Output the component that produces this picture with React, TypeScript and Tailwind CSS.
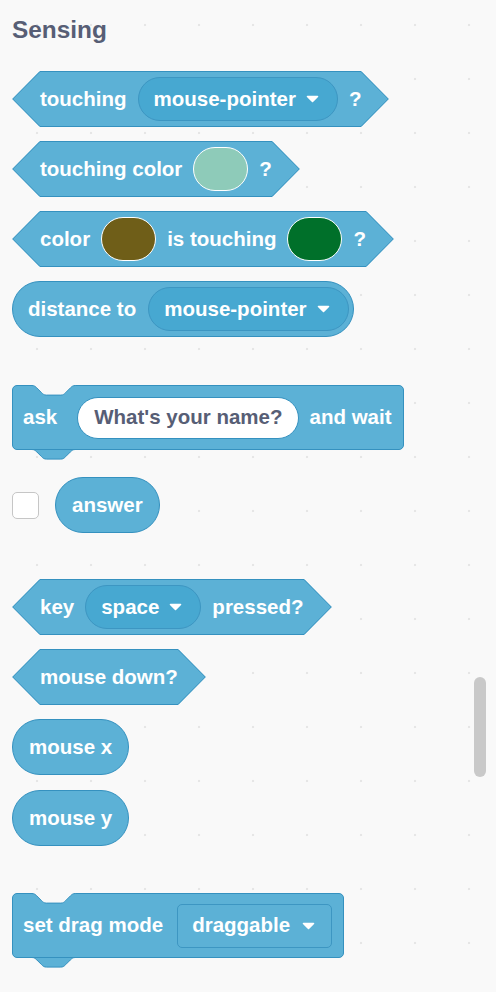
import type { ReactNode } from "react";

// scratch-ish notch curve, scaled 1.2
const NOTCH =
    "M0 0.5 c2.4 0 3.6 1.2 4.8 2.4 l4.8 4.8 c1.2 1.2 2.4 2.4 4.8 2.4 h14.4 c2.4 0 3.6 -1.2 4.8 -2.4 l4.8 -4.8 c1.2 -1.2 2.4 -2.4 4.8 -2.4";

function Arrow() {
    return (
        <svg width="13" height="8" viewBox="0 0 13 8" className="block shrink-0">
            <path
                d="M1.5 1.5 H11.5 L6.5 6.5 Z"
                fill="#fff"
                stroke="#fff"
                strokeWidth="1.6"
                strokeLinejoin="round"
            />
        </svg>
    );
}

function Label({ children }: { children: ReactNode }) {
    return <span className="whitespace-nowrap leading-none">{children}</span>;
}

function Dropdown({ label }: { label: string }) {
    return (
        <div className="flex h-[44px] items-center gap-[10px] rounded-full border border-[#3d96c2] bg-[#47a8d1] pl-[15px] pr-[18px]">
            <Label>{label}</Label>
            <Arrow />
        </div>
    );
}

function Swatch({ className }: { className: string }) {
    return <div className={"h-[44px] w-[55px] rounded-[22px] border border-white " + className} />;
}

function Hex({ children, className = "" }: { children: ReactNode; className?: string }) {
    return (
        <div className={"flex h-[56px] w-fit " + className}>
            <svg width="28" height="56" viewBox="0 0 28 56" className="block shrink-0">
                <polygon points="28,0 0.5,28 28,56" fill="#5cb1d6" />
                <polyline points="28,0.5 0.7,28 28,55.5" fill="none" stroke="#3591bf" />
            </svg>
            <div className="flex items-center gap-[11px] border-y border-[#3591bf] bg-[#5cb1d6]">
                {children}
            </div>
            <svg width="28" height="56" viewBox="0 0 28 56" className="block shrink-0">
                <polygon points="0,0 27.5,28 0,56" fill="#5cb1d6" />
                <polyline points="0,0.5 27.3,28 0,55.5" fill="none" stroke="#3591bf" />
            </svg>
        </div>
    );
}

function Reporter({ children, className = "" }: { children: ReactNode; className?: string }) {
    return (
        <div
            className={
                "flex h-[56px] w-fit items-center rounded-full border border-[#3591bf] bg-[#5cb1d6] px-[16px] " +
                className
            }
        >
            <Label>{children}</Label>
        </div>
    );
}

function Stack({ children, className = "" }: { children: ReactNode; className?: string }) {
    return (
        <div className={"flex w-fit flex-col " + className}>
            <div className="relative flex h-[65px] items-center rounded-[5px] border border-[#3591bf] bg-[#5cb1d6] pl-[10px] pr-[11px]">
                <svg
                    width="44"
                    height="12"
                    viewBox="0 0 44 12"
                    className="absolute -top-px left-[19px] block"
                >
                    <path d={NOTCH + " L43.2 0 L0 0 Z"} fill="#f9f9f9" />
                    <path d={NOTCH} fill="none" stroke="#3591bf" />
                </svg>
                {children}
            </div>
            <svg width="44" height="12" viewBox="0 0 44 12" className="-mt-px ml-[20px] block">
                <path d={NOTCH + " L43.2 0 L0 0 Z"} fill="#5cb1d6" />
                <path d={NOTCH} fill="none" stroke="#3591bf" />
            </svg>
        </div>
    );
}

export default function App() {
    return (
        <main className="relative h-[992px] w-full overflow-hidden bg-[#f9f9f9] bg-[radial-gradient(circle,#e6e6e6_1px,transparent_1.6px)] bg-[size:54px_54px] bg-[position:10px_-2px] font-['Liberation_Sans',Arial,sans-serif]">
            <div className="flex flex-col items-start pl-[12px] pt-[17px] text-[20.5px] font-bold text-white">
                <h2 className="h-[25px] text-[24.4px] leading-[25px] font-bold text-[#575e75]">
                    Sensing
                </h2>

                <Hex className="mt-[29px]">
                    <Label>touching</Label>
                    <Dropdown label="mouse-pointer" />
                    <Label>?</Label>
                </Hex>

                <Hex className="mt-[14px]">
                    <Label>touching color</Label>
                    <Swatch className="bg-[#8ecbb9]" />
                    <Label>?</Label>
                </Hex>

                <Hex className="mt-[14px]">
                    <Label>color</Label>
                    <Swatch className="bg-[#6f5e18]" />
                    <Label>is touching</Label>
                    <Swatch className="bg-[#00702a]" />
                    <Label>?</Label>
                </Hex>

                <div className="mt-[14px] flex h-[56px] w-fit items-center gap-[12px] rounded-full border border-[#3591bf] bg-[#5cb1d6] pl-[15px] pr-[4px]">
                    <Label>distance to</Label>
                    <Dropdown label="mouse-pointer" />
                </div>

                <Stack className="mt-[48px]">
                    <Label>ask</Label>
                    <div className="ml-[20px] flex h-[42px] items-center rounded-full border border-[#3591bf] bg-white px-[16px] text-[#575e75]">
                        <Label>What's your name?</Label>
                    </div>
                    <span className="ml-[10px] whitespace-nowrap leading-none">and wait</span>
                </Stack>

                <div className="mt-[16px] flex items-center gap-[16px]">
                    <div className="h-[27px] w-[27px] rounded-[5px] border border-[#c6c6c6] bg-white" />
                    <Reporter>answer</Reporter>
                </div>

                <Hex className="mt-[46px]">
                    <Label>key</Label>
                    <Dropdown label="space" />
                    <Label>pressed?</Label>
                </Hex>

                <Hex className="mt-[14px]">
                    <Label>mouse down?</Label>
                </Hex>

                <Reporter className="mt-[14px]">mouse x</Reporter>
                <Reporter className="mt-[15px]">mouse y</Reporter>

                <Stack className="mt-[47px]">
                    <Label>set drag mode</Label>
                    <div className="ml-[14px] flex h-[44px] items-center gap-[12px] rounded-[5px] border border-[#3d96c2] bg-[#5cb1d6] pl-[14px] pr-[16px]">
                        <Label>draggable</Label>
                        <Arrow />
                    </div>
                </Stack>
            </div>

            <div className="absolute left-[474px] top-[677px] h-[100px] w-[12px] rounded-full bg-[#c9c9c9]" />
        </main>
    );
}
